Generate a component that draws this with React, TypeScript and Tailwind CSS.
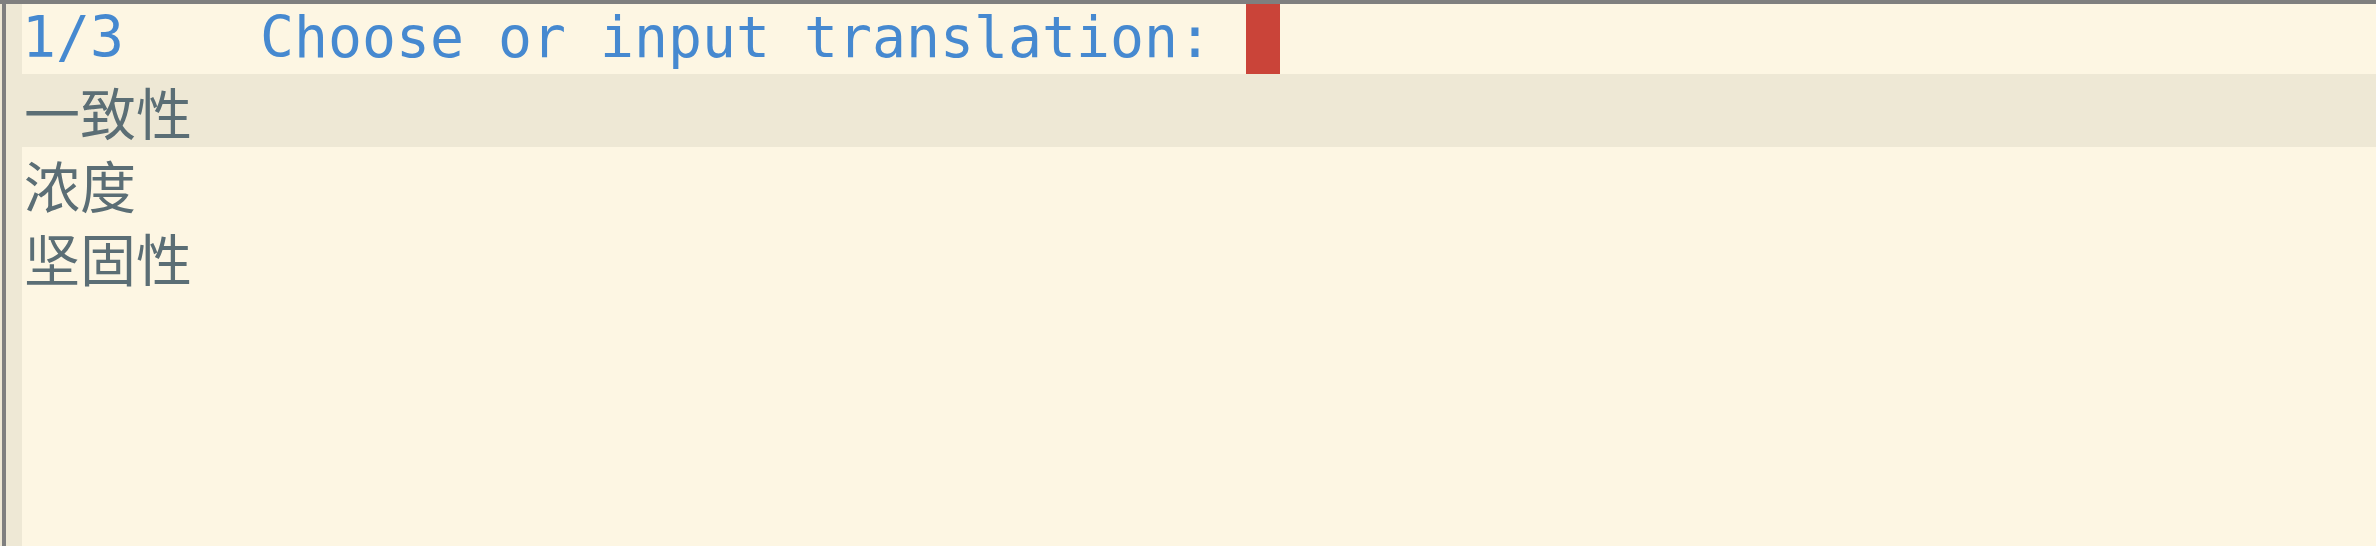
import React from "react";

const mono = { fontFamily: '"DejaVu Sans Mono", "Liberation Mono", monospace' };
const cjk = { fontFamily: '"Noto Sans CJK SC", "Noto Sans CJK TC", sans-serif' };

export default function App() {
  const items = ["一致性", "浓度", "坚固性"];
  return (
    <div className="w-[2376px] h-[546px] bg-[#fdf6e3] flex flex-col overflow-hidden">
      <div className="h-[4px] bg-[#7f7f7f] shrink-0" />
      <div className="flex flex-1 min-h-0">
        <div className="w-[2px] bg-[#eee8d5] shrink-0" />
        <div className="w-[4px] bg-[#7f7f7f] shrink-0" />
        <div className="w-[16px] bg-[#eee8d5] shrink-0" />
        <div className="flex-1 flex flex-col min-w-0">
          <div
            className="h-[70px] flex items-stretch text-[56.47px] leading-[70px] text-[#4689d0] whitespace-pre"
            style={mono}
          >
            <span className="leading-[68px]">{"1/3    Choose or input translation: "}</span>
            <span className="w-[34px] h-[70px] bg-[#ca4439] inline-block" />
          </div>
          {items.map((t, i) => (
            <div
              key={t}
              className={`h-[73px] flex items-center pl-[2px] text-[56px] leading-[64px] text-[#5b6e75] whitespace-nowrap ${
                i === 0 ? "bg-[#eee8d5]" : ""
              }`}
              style={cjk}
            >
              {t}
            </div>
          ))}
        </div>
      </div>
    </div>
  );
}
